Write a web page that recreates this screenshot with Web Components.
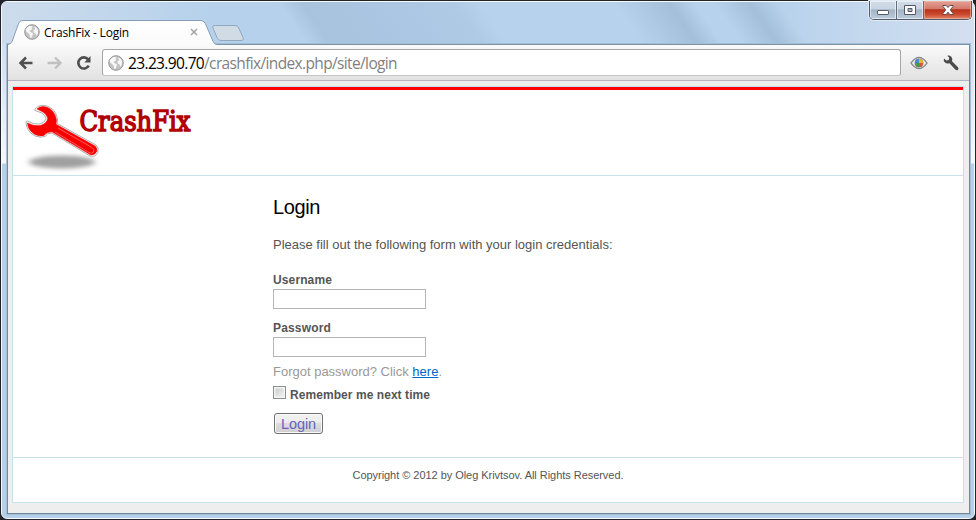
<!DOCTYPE html>
<html lang="en">
<head>
<meta charset="utf-8">
<title>CrashFix - Login</title>
<style>
html,body{margin:0;height:100%;background:#23232b;overflow:hidden}
body{font-family:"Liberation Sans",Arial,sans-serif}
</style>
</head>
<body>
<app-window>
  <browser-tab slot="tabs"><fit-text w="85">CrashFix - Login</fit-text></browser-tab>
  <nav-toolbar slot="toolbar"><fit-text w="269"><span style="color:#000">23.23.90.70</span>/crashfix/index.php/site/login</fit-text></nav-toolbar>
  <site-page>
    <site-header slot="header"></site-header>
    <login-form></login-form>
    <fit-text slot="footer" w="271">Copyright © 2012 by Oleg Krivtsov. All Rights Reserved.</fit-text>
  </site-page>
</app-window>

<script>
function define(name, html, setup) {
  const t = document.createElement('template');
  t.innerHTML = html;
  customElements.define(name, class extends HTMLElement {
    constructor() {
      super();
      this.attachShadow({mode: 'open'}).append(t.content.cloneNode(true));
    }
    connectedCallback() { if (setup) setup(this); }
  });
}

/* Inline text spaced out to a given width */
define('fit-text', `<style>:host{display:inline-block;white-space:nowrap}</style><slot></slot>`, el => {
  requestAnimationFrame(() => {
    const w = parseFloat(el.getAttribute('w'));
    const n = el.textContent.length;
    const d = (w - el.getBoundingClientRect().width) / n;
    el.style.letterSpacing = d.toFixed(4) + 'px';
  });
});

define('globe-icon', `<style>:host{display:block;width:16px;height:16px}svg{display:block;width:100%;height:100%}</style>
<svg viewBox="0 0 16 16"><circle cx="8" cy="8" r="7.3" fill="#c4c4c4" stroke="#969696"/>
<path d="M3 3.8 5.5 2 8.6 2.2 7.6 3.7 8.3 5 6.6 6.2 5.6 7.4 7.4 8.6 9 9.6 8.4 11.5 7.2 14 6 13.5 5.8 11 4.4 9.3 2.2 7.4 1.7 6Z M10.2 2.6 12.5 3.8 14 6.2 13.9 9.6 12.4 11.8 11.6 9.4 9.8 8.4 9.5 6.2 11.2 5.2Z" fill="#f7f7f7"/></svg>`);

define('window-buttons', `<style>
:host{display:flex;width:103px;border:1px solid #515b6b;border-top:0;border-radius:0 0 5px 5px;overflow:hidden;box-sizing:border-box;height:19px;box-shadow:0 0 0 1px #dfeaf5}
div{display:flex;justify-content:center;align-items:center;width:27px;box-sizing:border-box;border-right:1px solid #616c7b;box-shadow:inset 0 0 0 1px #ffffff90;background:linear-gradient(#d2dce8 0,#c8d4e1 46%,#a3b3c5 48%,#bdccdc 100%)}
div:last-child{width:47px;border:0;background:linear-gradient(#e3a194 0,#d3786b 45%,#b93119 48%,#cb4a2e 75%,#e28a6c 100%);box-shadow:inset 0 0 0 1px #f3bfb190}
svg{display:block}
</style>
<div><svg width="14" height="14"><rect x="1.500" y="7.500" width="11" height="4" rx=".6" fill="#fff" stroke="#525a68"/></svg></div>
<div><svg width="14" height="14"><path d="M1.500 2.500h11v9h-11z" fill="#fff" stroke="#525a68"/><path d="M5 5.500h4v3H5z" fill="#a8b5c5" stroke="#525a68"/></svg></div>
<div><svg width="14" height="14"><path d="M2 2.500h3.200L7 4.500l1.800-2H12v1L9.300 6.800 12 10.500v1H8.800L7 9.200l-1.800 2.300H2v-1l2.700-3.700L2 3.500z" fill="#fff" stroke="#5d4a52"/></svg></div>`);

define('browser-tab', `<style>
:host{display:block;position:relative;width:234px;height:25px;font:12px "Open Sans","Noto Sans",sans-serif;color:#000}
.bg{position:absolute;left:1px;top:0}
.row{position:relative;display:flex;align-items:center;height:24px;padding-left:17px}
globe-icon{margin-right:4px}
.x{margin-left:61px}
</style>
<svg class="bg" width="238" height="26"><defs><linearGradient id="g" x2="0" y2="1"><stop offset="0" stop-color="#fff"/><stop offset="1" stop-color="#fafafa"/></linearGradient></defs>
<path d="M0 24.500C3 24 4 22 5 19L10 5C11 2 12 .5 15 .5H192C195 .5 197 2 198 5L204 19C205.500 22.500 206 24 209 24.500V26H0Z" fill="url(#g)"/>
<path d="M0 24.500C3 24 4 22 5 19L10 5C11 2 12 .5 15 .5H192C195 .5 197 2 198 5L204 19C205.500 22.500 206 24 209 24.500" fill="none" stroke="#87a0b7"/>
<path d="M207.500 5.500H226C229 5.500 230 6 231 8.500L235 17.500C236 20 235 20.500 233 20.500H214C211 20.500 210 19.500 209 17.500L205 8C204.500 6 205 5.500 207.500 5.500Z" fill="#d0dbe6" stroke="#92a8bd"/></svg>
<div class="row"><globe-icon></globe-icon><slot></slot><svg class="x" width="8" height="8"><path d="M1 1 7 7M7 1 1 7" stroke="#a3a3a3" stroke-width="1.500"/></svg></div>`);

define('nav-toolbar', `<style>
:host{display:flex;box-sizing:border-box;height:36px;align-items:center;padding:0 8px 0 10px;background:linear-gradient(#fafafa,#e1e1e1);border-bottom:1px solid #b4b4c0;color:#7f7f7f;font:15.500px "Open Sans","Noto Sans",sans-serif}
svg{display:block;flex:none}
.url{display:flex;flex:none;align-items:center;box-sizing:border-box;width:799px;height:27px;margin-left:10px;padding-left:5px;border:1px solid #a6a6aa;border-bottom-color:#c6c6c9;border-radius:3px;background:#fff}
globe-icon{margin-right:4px}
</style>
<svg width="16" height="16"><path d="M8 2.500 2.500 8 8 13.500M3 8H14.500" fill="none" stroke="#4f4f4f" stroke-width="2.500"/></svg>
<svg width="16" height="16" style="margin-left:13px"><path d="M8 2.500 13.500 8 8 13.500M13 8H.5" fill="none" stroke="#c0c0c0" stroke-width="2.300"/></svg>
<svg width="16" height="16" style="margin-left:13px"><path d="M12.200 4.300A5.600 5.600 0 1 0 12.800 10.700" fill="none" stroke="#4d4d4d" stroke-width="2.600"/><path d="M14.500 1V7.500H8.300Z" fill="#4d4d4d"/></svg>
<div class="url"><globe-icon></globe-icon><slot></slot></div>
<svg width="18" height="14" style="margin-left:9px"><path d="M1 7Q9-4 17 7Q9 18 1 7Z" fill="#f2f2f2" stroke="#8d8d8d" stroke-width="1.300"/><circle cx="9" cy="7" r="4.500" fill="#888"/><path d="M9 7V3A4 4 0 0 0 5 7Z" fill="#3a8fd8"/><path d="M9 7V3A4 4 0 0 1 13 7Z" fill="#f4b51d"/><path d="M9 7H5A4 4 0 0 0 9 11Z" fill="#3f9d48"/><path d="M9 7h4A4 4 0 0 1 9 11Z" fill="#db5632"/></svg>
<svg width="16" height="16" style="margin-left:15px"><path d="M4.300.7 6.300 2.700 5.700 5 3.400 5.500 1 3.400Q0 6 2 7.600 3.800 9 6.400 8.200L12.500 14.800Q14 15.700 15 14.700 16 13.600 15 12.300L9 6.300Q10 3.500 8.300 1.800 6.700.2 4.300.7Z" fill="#4b4b4b"/></svg>`);

define('site-header', `<style>
:host{display:block;height:85px;border-bottom:1px solid #c9e0ed}
svg{display:block}
</style>
<svg width="200" height="85"><defs><filter id="b" x="-20%" y="-80%" width="140%" height="260%"><feGaussianBlur stdDeviation="3 2"/></filter>
<linearGradient id="t" x2="0" y2="1"><stop offset=".25" stop-color="#8c0000"/><stop offset=".55" stop-color="#c00000"/><stop offset=".85" stop-color="#d80000"/></linearGradient></defs>
<ellipse cx="49" cy="72" rx="33" ry="6.500" fill="#a0a0a0" filter="url(#b)"/>
<path d="M22 19Q25 15.300 30 15.300Q39 16 43 24Q45.500 29 44.200 33.500L83 55Q86.500 58 84.800 62.500Q82.500 67.500 77 66L39 43Q34 43 32 46.500Q28 48 22 46Q13 41 13 31.500L14.500 31Q21 35 27 34Q32 32.500 33 28.500Q32.500 25.500 29 23L22 20.500Z" fill="#fff" stroke="#a4a4a4" stroke-width=".9"/>
<path d="M24 19Q26 16.500 30 16.500Q38.500 17 42 25Q44.300 29.500 43 34.300L82 56Q84.800 58.500 83.500 62Q81.500 65.500 77.500 64.800L39 41.800Q33.500 42 31 45.400Q27 46.800 22 44.500Q15 40.500 14.500 33Q21 36.800 27.500 35.500Q34 33.500 34.700 28.500Q34 24.500 30 22Z" fill="#f90000" stroke="#f90000" stroke-width=".6"/>
<path d="M45 38 79 57.500Q82 59.500 80.500 62Q79 64 76 62.500L42 42" fill="none" stroke="#ff7272" stroke-width=".8"/>
<text x="66.500" y="41.300" textLength="111" lengthAdjust="spacingAndGlyphs" font-family="DejaVu Serif,serif" font-size="27.500" fill="url(#t)" stroke="#b00000" stroke-width="1.500">CrashFix</text></svg>`);

define('text-field', `<style>:host{display:block;height:48px}label{display:block;font-weight:700;font-size:12px;line-height:18px;height:18px}input{display:block;box-sizing:border-box;width:153px;height:20px;border:1px solid #b5b5b5;margin:0;padding:1px;background:#fff}</style><label><slot></slot></label><input>`);

define('login-form', `<style>
:host{display:block;padding-left:260px;color:#555;font-size:13px}
h1{margin:0;padding-top:17px;height:33px;font:400 20px/28px "Liberation Sans",Arial,sans-serif;color:#000}
.intro{height:45px;line-height:16px;padding-top:11px;box-sizing:border-box}
.hint{color:#999;line-height:16px;height:20px;padding-top:3px;margin-top:-6px}
a{color:#06c;text-decoration:underline}
.check{display:flex;align-items:center;height:18px;margin-top:2px;font-weight:700;font-size:12px;line-height:18px}
.box{box-sizing:border-box;width:13px;height:13px;margin:-6px 4px 0 0;border:1px solid #8e8f8f;background:linear-gradient(135deg,#c3c7cc,#f6f6f6);box-shadow:inset 0 0 0 1.500px #f4f4f4}
button{display:block;box-sizing:border-box;width:49px;height:21px;margin:9px 0 0 1px;padding:0;border:1px solid #707070;border-radius:3px;background:linear-gradient(#f2f2f2 0,#ebebeb 49%,#ddd 50%,#cfcfcf 100%);box-shadow:inset 0 0 0 1px #fafafa;font:14.500px/18px "Liberation Sans",Arial,sans-serif;color:#6b5fc0}
</style>
<h1><fit-text w="47">Login</fit-text></h1>
<div class="intro"><fit-text w="339.500">Please fill out the following form with your login credentials:</fit-text></div>
<text-field><fit-text w="59">Username</fit-text></text-field>
<text-field><fit-text w="58">Password</fit-text></text-field>
<div class="hint"><fit-text w="169">Forgot password? Click <a>here</a>.</fit-text></div>
<div class="check"><span class="box"></span><fit-text w="140">Remember me next time</fit-text></div>
<button><fit-text w="35">Login</fit-text></button>`);

define('site-page', `<style>
:host{display:flex;flex-direction:column;box-sizing:border-box;width:952px;height:417px;margin:5px 0 0 4px;border:1px solid #c9e0ed;background:#fff}
.top{border-top:3px solid #f00}
main{flex:1}
footer{box-sizing:border-box;height:45px;border-top:1px solid #c9dcea;padding-top:10px;text-align:center;font-size:11px;line-height:14px;color:#555}
</style>
<div class="top"><slot name="header"></slot></div><main><slot></slot></main><footer><slot name="footer"></slot></footer>`);

define('app-window', `<style>
:host{display:block;box-sizing:border-box;width:976px;height:520px;padding:1px}
.glass{box-sizing:border-box;height:518px;border:1px solid #f5faff;border-radius:6px;padding:0 4px 5px 5px;
background:linear-gradient(#c8daee,#d4e2f4 60px,#f4f8fd 160px,#f4f8fd 161px,#b5d0eb 162px,#b5d0eb)}
.sky{box-sizing:border-box;height:42px;margin:0 -4px 0 -5px;padding:0 2px 0 5px;border-radius:5px 5px 0 0;background:
linear-gradient(90deg,#cddcec,#b9d1ea00 22%,#d3dff000 80%,#d3dff0 100%),
linear-gradient(55deg,#b6d1ec 30.500%,#a8c3dd 32.800%,#abc6e2 40%,#aecae5 48%,#b7d2ed 50.500% 64%,#a4bfda 69.500%,#b7d2ed 72% 74%,#a4bfda 77.500%,#b8d2ec 80.500%)}
.caption{display:flex;justify-content:flex-end;height:18px;align-items:flex-start}
window-buttons{margin-top:-1px}
.tabs{height:24px;position:relative;z-index:1}
.client{height:468px;border:1px solid #77899b;border-top-color:#7b92a7;border-bottom-color:#74899f;background:#eee;box-shadow:0 0 0 1px #a3bdd5}
</style>
<div class="glass">
<div class="sky"><div class="caption"><window-buttons></window-buttons></div><div class="tabs"><slot name="tabs"></slot></div></div>
<div class="client"><slot name="toolbar"></slot><slot></slot></div>
</div>`);
</script>
</body>
</html>
